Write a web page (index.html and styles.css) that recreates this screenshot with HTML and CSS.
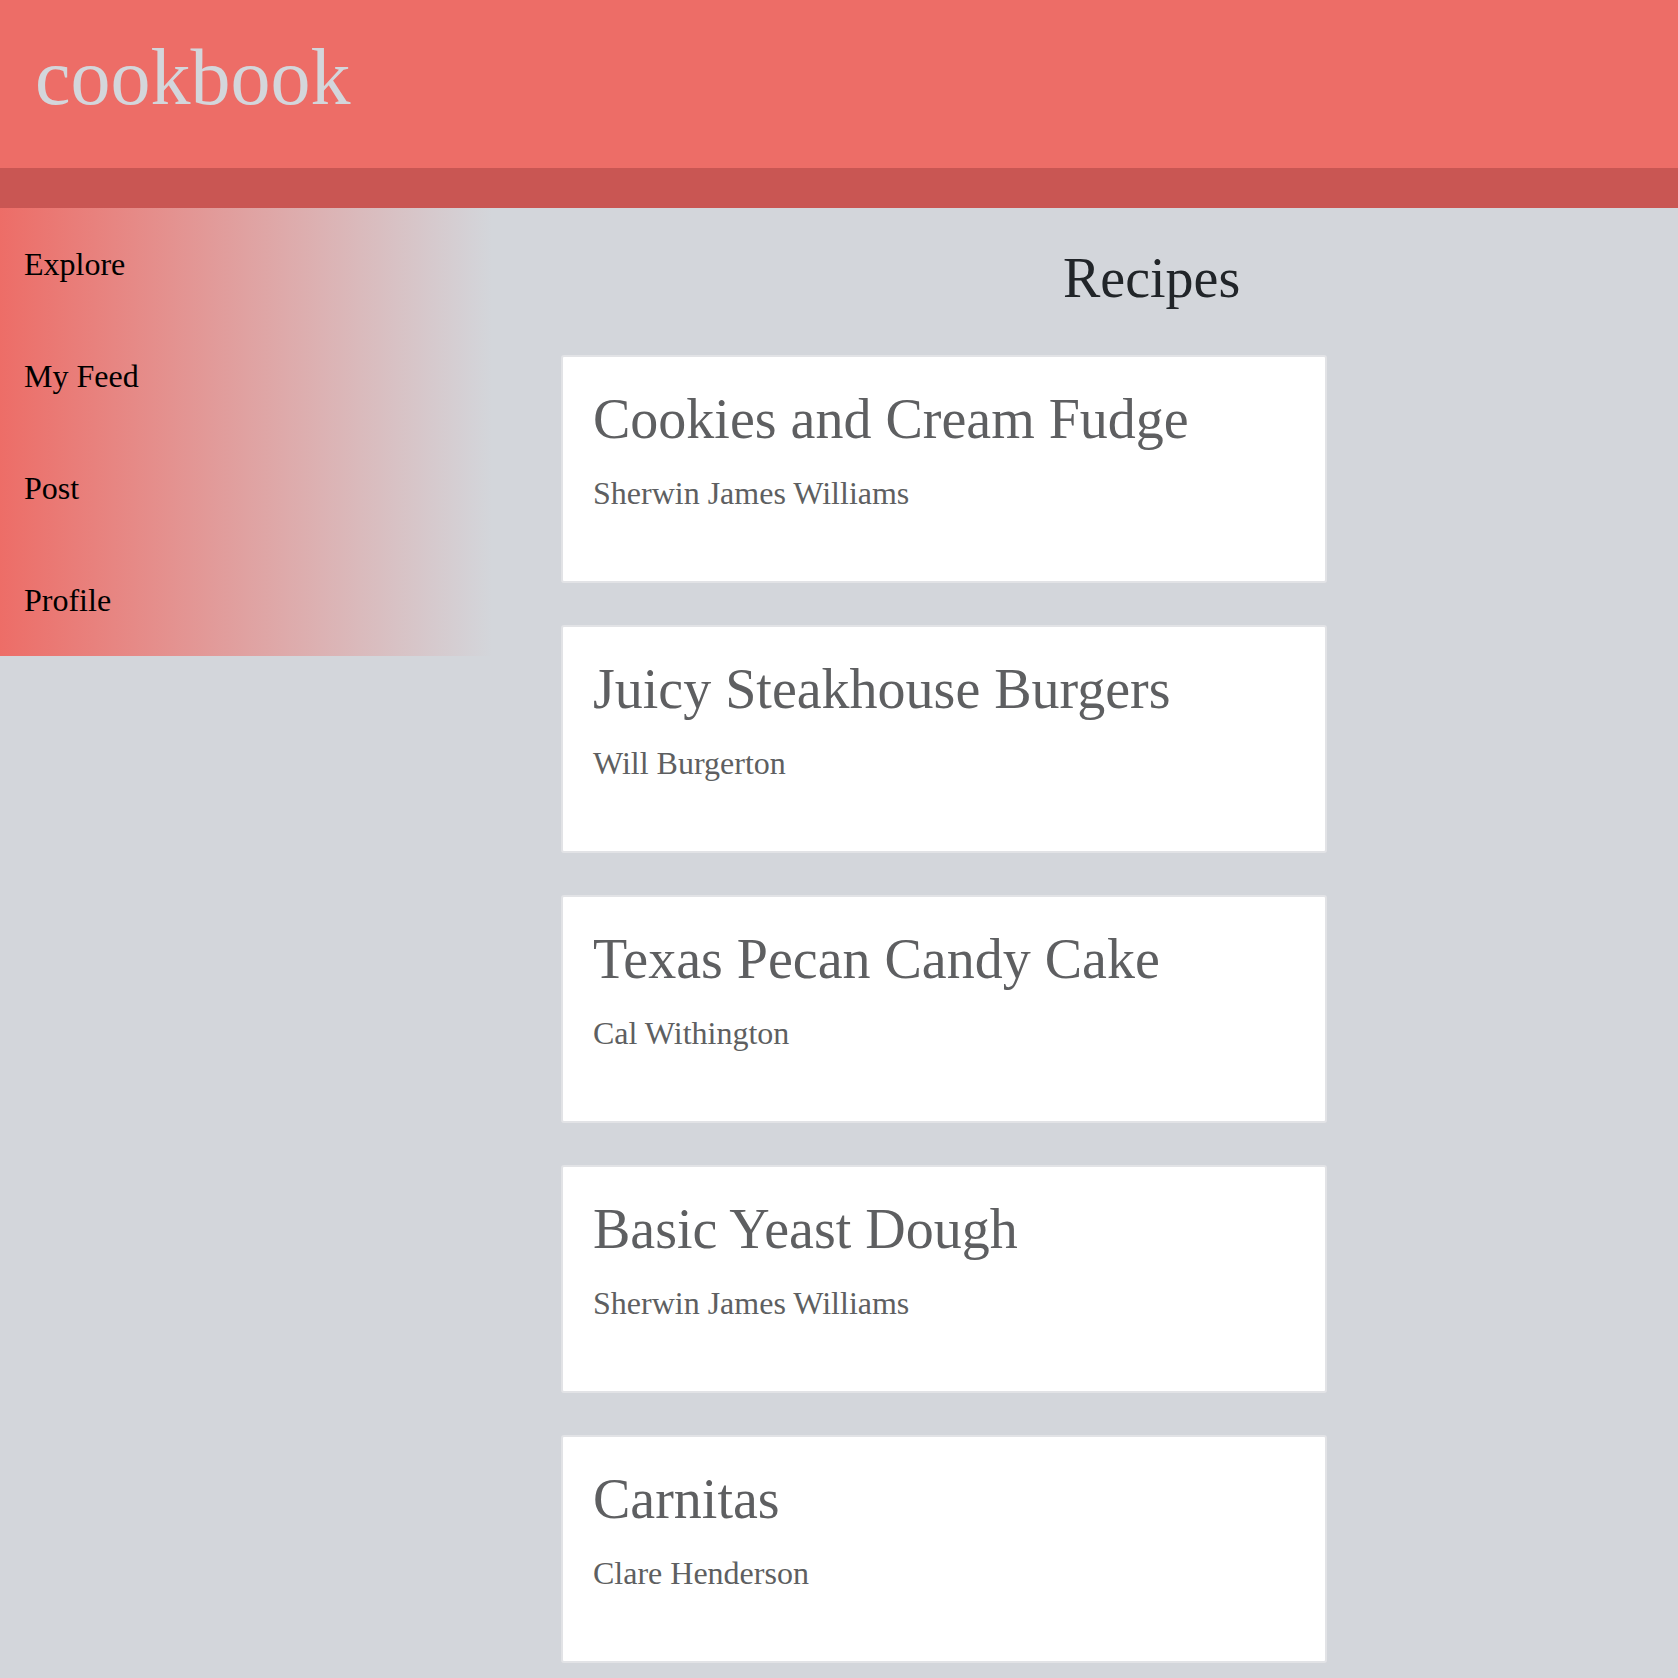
FILE: index.html
```html
<!DOCTYPE html>
<html lang="en">
<head>
<meta charset="utf-8">
<title>cookbook</title>
<link rel="stylesheet" href="styles.css">
</head>
<body>
<header class="topbar">
  <div class="brand">cookbook</div>
</header>
<div class="subbar"></div>
<div class="layout">
  <nav class="sidebar">
    <a class="nav-item" href="#">Explore</a>
    <a class="nav-item" href="#">My Feed</a>
    <a class="nav-item" href="#">Post</a>
    <a class="nav-item" href="#">Profile</a>
  </nav>
  <main class="main">
    <h1 class="page-title">Recipes</h1>
    <div class="cards">
      <article class="card">
        <h2 class="card-title">Cookies and Cream Fudge</h2>
        <p class="card-author">Sherwin James Williams</p>
      </article>
      <article class="card">
        <h2 class="card-title">Juicy Steakhouse Burgers</h2>
        <p class="card-author">Will Burgerton</p>
      </article>
      <article class="card">
        <h2 class="card-title">Texas Pecan Candy Cake</h2>
        <p class="card-author">Cal Withington</p>
      </article>
      <article class="card">
        <h2 class="card-title">Basic Yeast Dough</h2>
        <p class="card-author">Sherwin James Williams</p>
      </article>
      <article class="card">
        <h2 class="card-title">Carnitas</h2>
        <p class="card-author">Clare Henderson</p>
      </article>
    </div>
  </main>
</div>
</body>
</html>
```

FILE: styles.css
```css
html, body {
  margin: 0;
  padding: 0;
}

body {
  background: #d3d6db;
  font-family: "Liberation Serif", "Times New Roman", serif;
}

.topbar {
  height: 168px;
  box-sizing: border-box;
  background: #ed6d67;
  padding: 32px 35px 0;
}

.brand {
  font-size: 80px;
  line-height: normal;
  color: #d3d6db;
}

.subbar {
  height: 40px;
  background: #c95653;
}

.layout {
  display: flex;
  align-items: flex-start;
}

.sidebar {
  width: 492px;
  flex: none;
  display: flex;
  flex-direction: column;
  background: linear-gradient(to right, #ed6d67, #d3d6db);
}

.nav-item {
  height: 112px;
  display: flex;
  align-items: center;
  padding-left: 24px;
  font-size: 32px;
  color: #000;
  text-decoration: none;
}

.main {
  flex: 1;
  display: flex;
  flex-direction: column;
  padding-left: 69px;
  padding-bottom: 40px;
}

.page-title {
  margin: 38px 0 0 502px;
  font-size: 56px;
  font-weight: normal;
  line-height: normal;
  color: #212529;
}

.cards {
  display: flex;
  flex-direction: column;
  gap: 42px;
  margin-top: 45px;
  width: 766px;
}

.card {
  height: 228px;
  box-sizing: border-box;
  background: #fff;
  border: 2px solid #e2e3e6;
  border-radius: 3px;
  padding: 30px 30px;
}

.card-title {
  margin: 0 0 24px;
  font-size: 56px;
  font-weight: normal;
  line-height: normal;
  color: #5e5f61;
}

.card-author {
  margin: 0;
  font-size: 32px;
  line-height: normal;
  color: #5e5f61;
}
```
